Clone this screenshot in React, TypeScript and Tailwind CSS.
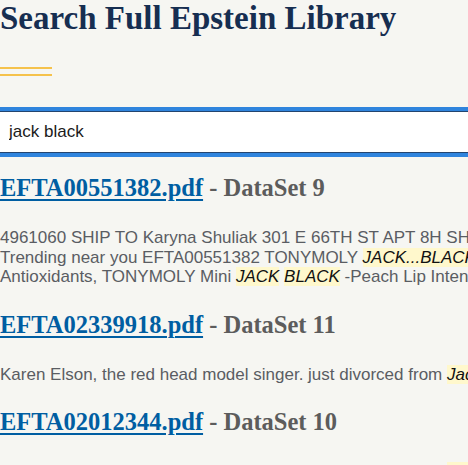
import React from "react";

const serif = { fontFamily: '"Liberation Serif", "Times New Roman", serif' };
const sans = { fontFamily: '"Liberation Sans", Arial, sans-serif' };

function Hit({ children }: { children: React.ReactNode }) {
  return <mark className="bg-[#fff8cc] text-[#111] italic">{children}</mark>;
}

interface Result {
  file: string;
  dataset: string;
  lines: React.ReactNode[];
}

const results: Result[] = [
  {
    file: "EFTA00551382.pdf",
    dataset: "DataSet 9",
    lines: [
      <>4961060 SHIP TO Karyna Shuliak 301 E 66TH ST APT 8H SHIPPING ADDRESS NEW YORK</>,
      <>
        Trending near you EFTA00551382 TONYMOLY <Hit>JACK...BLACK</Hit> Lip Balm
      </>,
      <>
        Antioxidants, TONYMOLY Mini <Hit>JACK</Hit> <Hit>BLACK</Hit> -Peach Lip Intensive Care
      </>,
    ],
  },
  {
    file: "EFTA02339918.pdf",
    dataset: "DataSet 11",
    lines: [
      <>
        Karen Elson, the red head model singer. just divorced from <Hit>Jack</Hit> White
      </>,
    ],
  },
  {
    file: "EFTA02012344.pdf",
    dataset: "DataSet 10",
    lines: [
      <>
        Karen Elson, the red head model singer. just divorced from <Hit>Jack</Hit> White
      </>,
    ],
  },
];

export default function App() {
  return (
    <div className="w-[468px] h-[465px] overflow-hidden bg-[#f6f6f2]">
      <div className="w-[680px]">
        <h1 className="text-[33px] leading-[36px] font-bold text-[#162e51] whitespace-nowrap" style={serif}>
          Search Full Epstein Library
        </h1>

        {/* double gold rule */}
        <div className="mt-[31px] flex flex-col gap-[5px] w-[52px]">
          <div className="h-[2px] bg-[#f5c24c]" />
          <div className="h-[2px] bg-[#f5c24c]" />
        </div>

        <input
          type="text"
          defaultValue="jack black"
          className="block mt-[35px] -ml-[5px] w-[640px] h-[42px] bg-white border border-[#23456f] outline-4 outline-solid outline-[#2f84dd] pl-[13px] text-[17px] text-[#1b1b1b]"
          style={sans}
        />

        <div className="mt-[20px] flex flex-col gap-[23px]">
          {results.map((r) => (
            <div key={r.file}>
              <h3 className="text-[24.5px] leading-[30px] font-bold whitespace-nowrap" style={serif}>
                <a href="#" className="text-[#005ea2] underline decoration-[2px] underline-offset-[3px]">
                  {r.file}
                </a>
                <span className="text-[#5c5c5c]"> - {r.dataset}</span>
              </h3>
              <p className="mt-[25px] text-[17px] leading-[19.5px] text-[#5a5d63] whitespace-nowrap" style={sans}>
                {r.lines.map((l, i) => (
                  <React.Fragment key={i}>
                    {l}
                    {i < r.lines.length - 1 && <br />}
                  </React.Fragment>
                ))}
              </p>
            </div>
          ))}
        </div>
      </div>
    </div>
  );
}
